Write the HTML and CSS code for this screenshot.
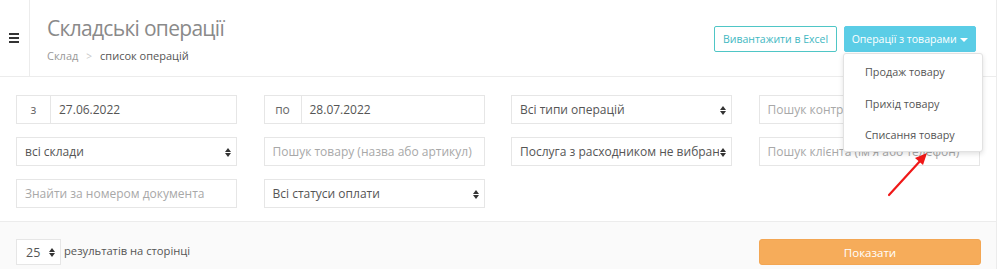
FILE: index.html
```html
<!DOCTYPE html>
<html lang="uk">
<head>
<meta charset="utf-8">
<title>Складські операції</title>
<link rel="stylesheet" href="styles.css">
</head>
<body>
<div class="main">
  <header class="header">
    <div class="burger"><span></span><span></span><span></span></div>
    <div class="title-block">
      <h1 class="title">Складські операції</h1>
      <div class="crumbs"><span class="crumb-link">Склад</span><span class="crumb-sep">&gt;</span><span class="crumb-cur">список операцій</span></div>
    </div>
    <div class="actions">
      <button class="btn btn-outline">Вивантажити в Excel</button>
      <div class="dd">
        <button class="btn btn-info">Операції з товарами <span class="caret"></span></button>
        <ul class="dd-menu">
          <li>Продаж товару</li>
          <li>Прихід товару</li>
          <li>Списання товару</li>
        </ul>
      </div>
    </div>
  </header>

  <section class="filters">
    <div class="field group"><span class="addon addon-z">з</span><span class="val">27.06.2022</span></div>
    <div class="field group"><span class="addon addon-po">по</span><span class="val">28.07.2022</span></div>
    <div class="field sel"><span class="val">Всі типи операцій</span><span class="arrows"></span></div>
    <div class="field"><span class="ph">Пошук контрагента</span></div>

    <div class="field sel"><span class="val">всі склади</span><span class="arrows"></span></div>
    <div class="field"><span class="ph">Пошук товару (назва або артикул)</span></div>
    <div class="field sel"><span class="val clip">Послуга з расходником не вибрано</span><span class="arrows"></span></div>
    <div class="field"><span class="ph">Пошук клієнта (ім'я або телефон)</span></div>

    <div class="field"><span class="ph">Знайти за номером документа</span></div>
    <div class="field sel"><span class="val">Всі статуси оплати</span><span class="arrows"></span></div>
  </section>

  <footer class="footer">
    <div class="per-page">
      <div class="field sel small"><span class="val">25</span><span class="arrows"></span></div>
      <span class="pp-label">результатів на сторінці</span>
    </div>
    <button class="btn btn-orange">Показати</button>
  </footer>
</div>

<svg class="red-arrow" width="60" height="60" viewBox="0 0 60 60">
  <line x1="6" y1="48" x2="38" y2="13" stroke="#f01818" stroke-width="2.2" stroke-linecap="round"/>
  <polygon points="44,6 32,11 40,18" fill="#f01818"/>
</svg>
</body>
</html>
```

FILE: styles.css
```css
* { box-sizing: border-box; }
html, body { margin: 0; padding: 0; }
body {
  font-family: "Open Sans", "Liberation Sans", sans-serif;
  background: #fff;
  color: #555;
  width: 1000px;
  height: 269px;
  overflow: hidden;
  position: relative;
}
.main {
  width: 997px;
  border-right: 1px solid #ececec;
  min-height: 269px;
  background: #fff;
}
.header {
  display: flex;
  height: 77px;
  border-bottom: 1px solid #ececec;
}
.burger {
  width: 30px;
  border-right: 1px solid #ececec;
  display: flex;
  flex-direction: column;
  padding: 33px 0 0 9px;
  gap: 2px;
}
.burger span {
  display: block;
  width: 10px;
  height: 2px;
  background: #333;
}
.title-block {
  padding: 13px 0 0 17px;
  flex: 1;
}
.title {
  margin: 0;
  font-weight: 400;
  font-size: 21px;
  line-height: 30px;
  color: #8a8a8a;
  letter-spacing: -0.7px;
}
.crumbs {
  margin-top: 5px;
  font-size: 11px;
  line-height: 16px;
}
.crumb-link { color: #999; }
.crumb-sep { color: #c8c8c8; margin: 0 8px; font-size: 10px; }
.crumb-cur { color: #555; }
.actions {
  display: flex;
  align-items: flex-start;
  gap: 7px;
  padding: 26px 20px 0 0;
}
.btn {
  font-family: inherit;
  font-size: 10.5px;
  height: 26px;
  border-radius: 2px;
  padding: 0;
  cursor: pointer;
  white-space: nowrap;
}
.btn-outline {
  background: #fff;
  border: 1px solid #4fc6c6;
  color: #3fb8c2;
  width: 123px;
}
.btn-info {
  background: #5bcde6;
  border: 1px solid #5bcde6;
  color: #fff;
  width: 132px;
}
.caret {
  display: inline-block;
  width: 0; height: 0;
  border-left: 4px solid transparent;
  border-right: 4px solid transparent;
  border-top: 4px solid #fff;
  vertical-align: middle;
  margin-left: 1px;
}
.dd { position: relative; }
.dd-menu {
  position: absolute;
  left: -1px;
  top: 27px;
  width: 140px;
  height: 99px;
  margin: 0;
  padding: 2px 0 0;
  list-style: none;
  background: #fff;
  border: 1px solid #e2e2e2;
  border-radius: 3px;
  box-shadow: 0 2px 5px rgba(0,0,0,0.12);
  z-index: 5;
}
.dd-menu li {
  font-size: 10.8px;
  line-height: 31.5px;
  padding-left: 21px;
  color: #555;
}
.filters {
  display: grid;
  grid-template-columns: repeat(4, 221px);
  column-gap: 26.5px;
  row-gap: 13px;
  padding: 18px 0 13px 16px;
  border-bottom: 1px solid #ececec;
}
.field {
  position: relative;
  height: 29px;
  border: 1px solid #e6e6e6;
  display: flex;
  align-items: center;
  padding: 0 8px;
  font-size: 12px;
  background: #fff;
  overflow: hidden;
  white-space: nowrap;
}
.field .val { color: #555; }
.field .ph { color: #a8a8a8; }
.field.group { padding: 0; }
.addon {
  align-self: stretch;
  display: flex;
  align-items: center;
  justify-content: center;
  border-right: 1px solid #e6e6e6;
  color: #666;
  font-size: 12px;
}
.addon-z { width: 34px; }
.addon-po { width: 37px; }
.group .val { padding-left: 8px; }
.val.clip { overflow: hidden; }
.sel { padding-right: 12px; }
.arrows {
  position: absolute;
  right: 4px;
  top: 50%;
  width: 8px;
  height: 10px;
  margin-top: -5px;
  background: #fff;
}
.arrows::before, .arrows::after {
  content: "";
  position: absolute;
  left: 1px;
  border-left: 3px solid transparent;
  border-right: 3px solid transparent;
}
.arrows::before { top: 1px; border-bottom: 4px solid #333; }
.arrows::after { bottom: 0; border-top: 4px solid #333; }
.footer {
  background: #fafafa;
  display: flex;
  justify-content: space-between;
  align-items: flex-start;
  padding: 17px 15px 10px 16px;
  height: 60px;
}
.per-page {
  display: flex;
  align-items: center;
  gap: 3px;
}
.field.small {
  width: 45px;
  height: 26px;
  padding-left: 9px;
  font-size: 12.5px;
}
.pp-label {
  font-size: 11.2px;
  color: #555;
  margin-top: -4px;
}
.btn-orange {
  width: 222px;
  height: 26px;
  background: #f6ac5a;
  border: 1px solid #f3a653;
  color: #fff;
  font-size: 11.5px;
  border-radius: 3px;
}
.red-arrow {
  position: absolute;
  left: 883px;
  top: 147px;
}
```
